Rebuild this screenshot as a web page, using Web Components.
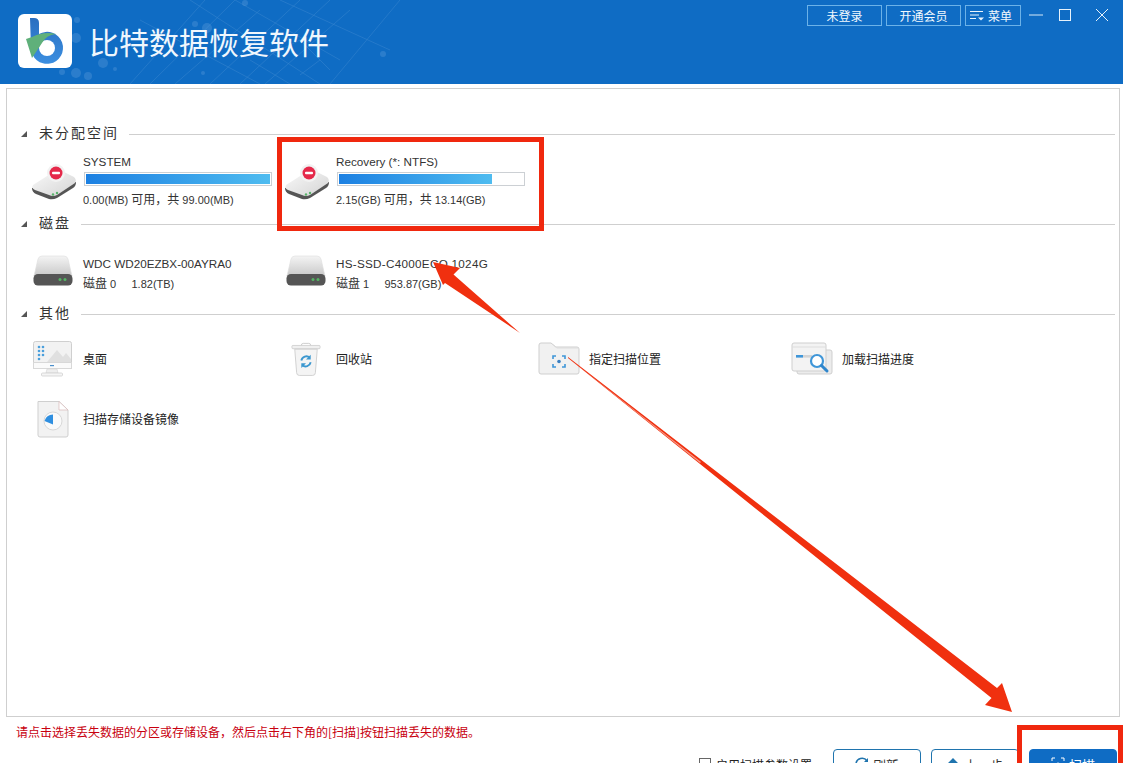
<!DOCTYPE html>
<html lang="zh-CN">
<head>
<meta charset="utf-8">
<title>比特数据恢复软件</title>
<style>
  html, body { margin: 0; height: 100%; background: #fff; overflow: hidden; }
  body {
    font-family: "Liberation Sans", "Noto Sans CJK SC", sans-serif;
    font-size: 12px;
    color: #333;
  }
  #app { position: relative; display: flex; flex-direction: column; width: 1123px; height: 763px; overflow: hidden; }
</style>
</head>
<body>
<div id="app">
  <app-header></app-header>
  <main-panel>
    <disk-group title="未分配空间" offset="small">
      <drive-item kind="partition" name="SYSTEM" info="0.00(MB) <b>可用，共</b> 99.00(MB)" used="100"></drive-item>
      <drive-item kind="partition" name="Recovery (*: NTFS)" info="2.15(GB) <b>可用，共</b> 13.14(GB)" used="83"></drive-item>
    </disk-group>
    <disk-group title="磁盘">
      <drive-item kind="disk" name="WDC WD20EZBX-00AYRA0" info="<b>磁盘</b> 0 &nbsp;&nbsp;&nbsp; 1.82(TB)"></drive-item>
      <drive-item kind="disk" name="<i>HS-SSD-C4000ECO 1024G</i>" info="<b>磁盘</b> 1 &nbsp;&nbsp;&nbsp; 953.87(GB)"></drive-item>
    </disk-group>
    <disk-group title="其他" offset="tools">
      <tool-item icon="desktop" label="桌面"></tool-item>
      <tool-item icon="recycle" label="回收站"></tool-item>
      <tool-item icon="folder" label="指定扫描位置"></tool-item>
      <tool-item icon="progress" label="加载扫描进度"></tool-item>
      <tool-item icon="image" label="扫描存储设备镜像"></tool-item>
    </disk-group>
  </main-panel>
  <app-footer></app-footer>
  <note-overlay></note-overlay>
</div>

<script>
  const ICONS = {
    partition: `
      <svg width="46" height="38" viewBox="0 0 46 38">
        <defs>
          <linearGradient id="t" x1="0" y1="0" x2="1" y2="1"><stop offset="0" stop-color="#fafafa"/><stop offset="1" stop-color="#d4d4d4"/></linearGradient>
        </defs>
        <path d="M1 25Q1 29 5 31L18 36Q22 37 26 35L42 25Q45 23 45 19Z" fill="#555"/>
        <path d="M2 22L24 8Q27 6 31 8L43 14Q46 17 44 20L26 32Q22 34 18 32L4 27Q0 25 2 22Z" fill="url(#t)"/>
        <circle cx="22" cy="31.5" r="1.2" fill="#59b36a"/>
        <circle cx="26" cy="30" r="1.2" fill="#59b36a"/>
        <circle cx="25" cy="10" r="9" fill="#f2f2f2"/>
        <circle cx="25" cy="10" r="6.5" fill="#e5294a"/>
        <rect x="21" y="8.7" width="8" height="2.6" rx="1" fill="#fff"/>
      </svg>`,
    disk: `
      <svg width="40" height="32" viewBox="0 0 40 32">
        <defs>
          <linearGradient id="d" x1="0" y1="0" x2="0" y2="1"><stop offset="0" stop-color="#f4f4f4"/><stop offset="1" stop-color="#c9c9c9"/></linearGradient>
        </defs>
        <path d="M5 4Q6 1 9 1H31Q34 1 35 4L39 21H1Z" fill="url(#d)" stroke="#ddd" stroke-width=".6"/>
        <rect x="0.5" y="19" width="39" height="11.5" rx="4.5" fill="#555"/>
        <circle cx="27" cy="24.5" r="1.5" fill="#54b463"/>
        <circle cx="32" cy="24.5" r="1.5" fill="#54b463"/>
      </svg>`,
    desktop: `
      <svg width="40" height="36" viewBox="0 0 40 36">
        <rect x=".5" y=".5" width="38" height="27" rx="2" fill="#f2f2f2" stroke="#cfcfcf"/>
        <rect x=".5" y="21.5" width="38" height="6" fill="#fafafa" stroke="#d8d8d8"/>
        <path d="M14 21L24 9L30 16L33 12L38 18V21Z" fill="#e0e0e0"/>
        <g fill="#4a9fdc">
          <circle cx="6" cy="6" r="1.3"/><circle cx="10" cy="6" r="1.3"/>
          <circle cx="6" cy="10" r="1.3"/><circle cx="10" cy="10" r="1.3"/>
          <circle cx="6" cy="14" r="1.3"/><circle cx="10" cy="14" r="1.3"/>
          <circle cx="6" cy="18" r="1.3"/>
        </g>
        <rect x="17" y="24" width="4" height="1.2" fill="#4a8fcc"/>
        <path d="M14 28H24L25 32H13Z" fill="#eee" stroke="#d4d4d4" stroke-width=".6"/>
        <rect x="8.5" y="32" width="21" height="3" rx="1" fill="#f5f5f5" stroke="#cfcfcf" stroke-width=".8"/>
      </svg>`,
    recycle: `
      <svg width="30" height="35" viewBox="0 0 32 36">
        <path d="M11 3Q11 .8 13 .8H19Q21 .8 21 3" fill="none" stroke="#ccc"/>
        <rect x="1" y="3" width="30" height="3.5" rx="1" fill="#f0f0f0" stroke="#c8c8c8" stroke-width=".8"/>
        <path d="M4 7H28L26 32Q26 35 23 35H9Q6 35 6 32Z" fill="#f4f4f4" stroke="#cfcfcf"/>
        <path d="M11 19A5.5 5.5 0 0 1 20 16" fill="none" stroke="#3b97cf" stroke-width="2"/>
        <path d="M21 13V18H16Z" fill="#3b97cf"/>
        <path d="M21 21A5.5 5.5 0 0 1 12 24" fill="none" stroke="#3b97cf" stroke-width="2"/>
        <path d="M11 27V22H16Z" fill="#3b97cf"/>
      </svg>`,
    folder: `
      <svg width="42" height="34" viewBox="0 0 42 34">
        <path d="M1 3Q1 1 3 1H13L18 5H39Q41 5 41 7V30Q41 32 39 32H3Q1 32 1 30Z" fill="#f1f1f1" stroke="#cfcfcf"/>
        <path d="M15 3L19 6H41" fill="none" stroke="#ddd"/>
        <g fill="none" stroke="#3f96d8" stroke-width="1.6">
          <path d="M15 17V14H18"/><path d="M24 14H27V17"/><path d="M27 22V25H24"/><path d="M18 25H15V22"/>
        </g>
        <circle cx="21" cy="19.5" r="1.8" fill="#3a7fc0"/>
      </svg>`,
    progress: `
      <svg width="42" height="34" viewBox="0 0 42 34">
        <path d="M6 8H39Q41 8 41 10V30Q41 32 39 32H8Q6 32 6 30Z" fill="#ececec" stroke="#cfcfcf"/>
        <path d="M1 3Q1 1 3 1H33Q35 1 35 3V27Q35 29 33 29H3Q1 29 1 27Z" fill="#f3f3f3" stroke="#cfcfcf"/>
        <path d="M1 5H35" stroke="#ddd"/>
        <rect x="5" y="13" width="7" height="2.6" fill="#3f96d8"/>
        <rect x="12" y="13" width="9" height="2.6" fill="#d4d4d4"/>
        <circle cx="26" cy="19" r="6" fill="#fff" stroke="#3f96d8" stroke-width="2.2"/>
        <path d="M30.5 23.5L36 29" stroke="#2f86cc" stroke-width="3" stroke-linecap="round"/>
      </svg>`,
    image: `
      <svg width="34" height="38" viewBox="0 0 34 38">
        <path d="M2 1.5H23L32 10V35Q32 37 30 37H4Q2 37 2 35Z" fill="#f2f2f2" stroke="#cfcfcf"/>
        <path d="M23 1.5V10H32Z" fill="#fff" stroke="#d8b9b9" stroke-width=".7"/>
        <circle cx="17" cy="21" r="9" fill="#fafafa" stroke="#d8d8d8"/>
        <path d="M17 14.5V21H8.5A9 9 0 0 1 17 14.5Z" fill="#2f8fe0"/>
        <path d="M8.5 21H17V24.5Z" fill="#2f8fe0"/>
      </svg>`,
  };

  class AppHeader extends HTMLElement {
    constructor() {
      super();
      this.attachShadow({ mode: 'open' });
    }

    connectedCallback() {
      this.shadowRoot.innerHTML = `
        <style>
          :host {
            display: flex;
            position: relative;
            flex: none;
            height: 84px;
            background: #0f6cc4;
            color: #fff;
            overflow: hidden;
          }
          .pattern { position: absolute; inset: 0; pointer-events: none; }
          .brand {
            position: relative;
            display: flex;
            align-items: center;
            gap: 17px;
            padding: 0 0 0 18px;
            height: 82px;
          }
          .logo {
            width: 54px;
            height: 54px;
            background: #fff;
            border-radius: 6px;
            display: flex;
          }
          h1 {
            margin: 0;
            font: 400 30px/1 "Noto Sans CJK SC", sans-serif;
            color: #f0f7fd;
            white-space: nowrap;
          }
          .actions {
            position: relative;
            display: flex;
            align-items: center;
            gap: 4px;
            height: 20px;
            margin: 5px 0 0 auto;
            padding-right: 14px;
          }
          .btn {
            box-sizing: border-box;
            display: flex;
            align-items: center;
            justify-content: center;
            gap: 3px;
            width: 75px;
            height: 21px;
            border: 1px solid #6cb2e8;
            font: 12px "Noto Sans CJK SC", sans-serif;
            color: #f2f8fd;
          }
          .btn.menu { width: 56px; padding-right: 4px; }
          .win { display: flex; align-items: center; margin-left: 4px; gap: 15px; }
          .win svg { display: block; }
        </style>
        <svg class="pattern" width="1123" height="84" viewBox="0 0 1123 84">
          <g stroke="#5f9fdc" stroke-width=".6" fill="none" opacity=".45">
            <path d="M130 84L205 0M150 84L235 0M175 84L260 10M210 84L300 0M240 84L330 0M265 84L350 10M330 84L400 0M140 20L260 84M190 0L320 84M235 0L340 60M280 0L390 50"/>
            <path d="M250 60L290 84M270 55L300 40L330 70M300 75L320 60"/>
          </g>
          <g fill="#5f9fdc" opacity=".35">
            <circle cx="77" cy="20" r="3"/><circle cx="76" cy="38" r="5"/><circle cx="88" cy="76" r="4"/>
            <circle cx="62" cy="72" r="3"/><circle cx="76" cy="73" r="5"/><circle cx="103" cy="63" r="5"/>
            <circle cx="115" cy="69" r="2"/><circle cx="207" cy="28" r="5"/><circle cx="195" cy="24" r="3"/>
            <circle cx="245" cy="3" r="3"/><circle cx="383" cy="54" r="3"/><circle cx="203" cy="73" r="2"/>
          </g>
        </svg>
        <div class="brand">
          <div class="logo">
            <svg width="54" height="54" viewBox="0 0 54 54">
              <defs>
                <linearGradient id="stem" x1="0" y1="0" x2="0" y2="1"><stop offset="0" stop-color="#2a6fc0"/><stop offset="1" stop-color="#3b8ee0"/></linearGradient>
              </defs>
              <path d="M12 4H16Q21 4 21 9V20A16 16 0 1 1 13 34Z" fill="url(#stem)"/>
              <circle cx="29" cy="34" r="8" fill="#fff"/>
              <path d="M8 25L14 23Q26 17 38 20Q28 21 24 29L14 44Z" fill="#5fb07a"/>
            </svg>
          </div>
          <h1>比特数据恢复软件</h1>
        </div>
        <div class="actions">
          <div class="btn">未登录</div>
          <div class="btn">开通会员</div>
          <div class="btn menu">
            <svg width="15" height="12" viewBox="0 0 15 12" fill="none" stroke="#eaf4fc">
              <path d="M0 2.5H13M0 6H9M0 9.5H6"/><path d="M8 8.5H14L11 11.5Z" fill="#eaf4fc" stroke="none"/>
            </svg>
            菜单
          </div>
          <div class="win">
            <svg width="14" height="14" viewBox="0 0 14 14" stroke="#d6e9f8"><path d="M0 7H14"/></svg>
            <svg width="14" height="14" viewBox="0 0 14 14" fill="none" stroke="#e6f2fb"><rect x="1.5" y="1.5" width="11" height="11"/></svg>
            <svg width="14" height="14" viewBox="0 0 14 14" style="margin-left:8px" stroke="#e6f2fb"><path d="M1 1L13 13M13 1L1 13"/></svg>
          </div>
        </div>
      `;
    }
  }

  class MainPanel extends HTMLElement {
    constructor() {
      super();
      this.attachShadow({ mode: 'open' });
    }

    connectedCallback() {
      this.shadowRoot.innerHTML = `
        <style>
          :host {
            display: block;
            box-sizing: border-box;
            flex: none;
            height: 629px;
            margin: 4px 3px 0 6px;
            padding: 34px 4px 0 0;
            border: 1px solid #cfcfcf;
            background: #fff;
          }
        </style>
        <slot></slot>
      `;
    }
  }

  class DiskGroup extends HTMLElement {
    constructor() {
      super();
      this.attachShadow({ mode: 'open' });
    }

    connectedCallback() {
      const offset = this.getAttribute('offset');
      const top = offset ? 6 : 24;
      this.shadowRoot.innerHTML = `
        <style>
          :host { display: block; height: 90px; }
          .title {
            display: flex;
            align-items: center;
            height: 20px;
            padding-left: 14px;
          }
          .arrow {
            width: 0;
            height: 0;
            border-style: solid;
            border-width: 0 0 6px 6px;
            border-color: transparent transparent #555 transparent;
            margin: 2px 12px 0 0;
          }
          .name {
            font: 14px "Noto Sans CJK SC", sans-serif;
            letter-spacing: 2px;
            color: #333;
            white-space: nowrap;
            padding-bottom: 2px;
          }
          .line { flex: 1; height: 1px; background: #cfcfcf; margin: 2px 0 0 10px; }
          .items {
            display: grid;
            grid-template-columns: repeat(4, 253px);
            padding: ${top}px 0 0 23px;
          }
        </style>
        <div class="title">
          <span class="arrow"></span>
          <span class="name">${this.getAttribute('title')}</span>
          <span class="line"></span>
        </div>
        <div class="items"><slot></slot></div>
      `;
    }
  }

  class DriveItem extends HTMLElement {
    constructor() {
      super();
      this.attachShadow({ mode: 'open' });
    }

    connectedCallback() {
      const kind = this.getAttribute('kind');
      const used = this.getAttribute('used');
      const bar = used
        ? `<div class="bar"><div class="fill" style="width:${used}%"></div></div>`
        : '';
      this.shadowRoot.innerHTML = `
        <style>
          :host {
            display: flex;
            align-items: center;
            height: ${used ? 60 : 34}px;
            font: 11.7px/14px "Liberation Sans", "Noto Sans CJK SC", sans-serif;
            color: #333;
          }
          .icon {
            flex: none;
            width: 53px;
            display: flex;
            box-sizing: border-box;
            padding-left: ${used ? 1 : 3}px;
            margin: ${used ? '6px 0 0' : '0 0 6px'};
          }
          .icon svg { display: block; }
          .text { display: flex; flex-direction: column; gap: ${used ? 0 : 6}px; padding-top: ${used ? 3 : 0}px; }
          .bar {
            box-sizing: border-box;
            width: 188px;
            height: 14px;
            margin: 3px 0 7px 1px;
            border: 1px solid #ccd0d4;
            padding: 1px;
          }
          .fill { height: 100%; background: linear-gradient(90deg, #1c80e2, #4fbcf0); }
          span { white-space: nowrap; }
          .info { font-size: 11px; }
          b { font-weight: 400; font-size: 12px; }
          i { font-style: normal; letter-spacing: .28px; }
        </style>
        <div class="icon">${ICONS[kind]}</div>
        <div class="text">
          <span>${this.getAttribute('name')}</span>
          ${bar}
          <span class="info">${this.getAttribute('info')}</span>
        </div>
      `;
    }
  }

  class ToolItem extends HTMLElement {
    constructor() {
      super();
      this.attachShadow({ mode: 'open' });
    }

    connectedCallback() {
      this.shadowRoot.innerHTML = `
        <style>
          :host {
            display: flex;
            align-items: center;
            height: 60px;
            font: 12px/14px "Noto Sans CJK SC", sans-serif;
            color: #222;
          }
          .icon {
            flex: none;
            box-sizing: border-box;
            width: 53px;
            padding-right: 7px;
            display: flex;
            justify-content: center;
          }
          .icon svg { display: block; }
          span { white-space: nowrap; }
        </style>
        <div class="icon">${ICONS[this.getAttribute('icon')]}</div>
        <span>${this.getAttribute('label')}</span>
      `;
    }
  }

  class AppFooter extends HTMLElement {
    constructor() {
      super();
      this.attachShadow({ mode: 'open' });
    }

    connectedCallback() {
      this.shadowRoot.innerHTML = `
        <style>
          :host { display: block; flex: none; font: 12px "Noto Sans CJK SC", sans-serif; }
          .hint {
            height: 30px;
            line-height: 30px;
            padding-left: 16px;
            color: #c8000f;
            white-space: nowrap;
          }
          .bar {
            display: flex;
            align-items: center;
            justify-content: flex-end;
            gap: 10px;
            height: 30px;
            margin-top: 2px;
            padding-right: 6px;
          }
          label { display: flex; align-items: center; gap: 5px; margin-right: 11px; color: #222; }
          .check { width: 10px; height: 10px; border: 1px solid #666; background: #fff; }
          .btn {
            box-sizing: border-box;
            display: flex;
            align-items: center;
            justify-content: center;
            gap: 4px;
            width: 88px;
            height: 30px;
            border: 1px solid #1f74ae;
            border-radius: 4px;
            background: #fff;
            font-size: 13px;
            color: #333;
          }
          .btn.primary { background: #0f6cc4; border-color: #0f6cc4; color: #fff; }
        </style>
        <div class="hint">请点击选择丢失数据的分区或存储设备，然后点击右下角的[扫描]按钮扫描丢失的数据。</div>
        <div class="bar">
          <label><span class="check"></span>启用扫描参数设置</label>
          <div class="btn">
            <svg width="14" height="14" viewBox="0 0 14 14" fill="none" stroke="#1f74ae" stroke-width="1.5"><path d="M1 7A6 6 0 0 1 12 4"/><path d="M13 1V5H9Z" fill="#1f74ae" stroke="none"/></svg>
            刷新
          </div>
          <div class="btn">
            <svg width="14" height="14" viewBox="0 0 14 14" fill="#1f74ae"><path d="M7 1L13 7H9V13H5V7H1Z"/></svg>
            上一步
          </div>
          <div class="btn primary">
            <svg width="14" height="14" viewBox="0 0 14 14" fill="none" stroke="#fff"><path d="M1 4V1H4M10 1H13V4M13 10V13H10M4 13H1V10"/><circle cx="7" cy="7" r="1.5" fill="#fff" stroke="none"/></svg>
            扫描
          </div>
        </div>
      `;
    }
  }

  // red marks drawn on top of the screenshot
  class NoteOverlay extends HTMLElement {
    constructor() {
      super();
      this.attachShadow({ mode: 'open' });
    }

    connectedCallback() {
      this.shadowRoot.innerHTML = `
        <style>
          :host { position: absolute; inset: 0; pointer-events: none; }
          svg { display: block; }
        </style>
        <svg width="1123" height="763" viewBox="0 0 1123 763">
          <g fill="none" stroke="#f0280e" stroke-width="5">
            <rect x="279.5" y="139.5" width="262" height="89"/>
            <rect x="1019.5" y="727.5" width="101" height="50"/>
          </g>
          <g fill="#f0300f">
            <path d="M433 262L460 268L453.5 274.5L520 333L445 283L443 285Z"/>
            <path d="M1012 712L985 705L991.5 698L568 358L568 357L997 688L1002 683Z"/>
          </g>
          <path d="M568 358L700 463L701 462Z" fill="#f59a88"/>
        </svg>
      `;
    }
  }

  customElements.define('app-header', AppHeader);
  customElements.define('main-panel', MainPanel);
  customElements.define('disk-group', DiskGroup);
  customElements.define('drive-item', DriveItem);
  customElements.define('tool-item', ToolItem);
  customElements.define('app-footer', AppFooter);
  customElements.define('note-overlay', NoteOverlay);
</script>
</body>
</html>
